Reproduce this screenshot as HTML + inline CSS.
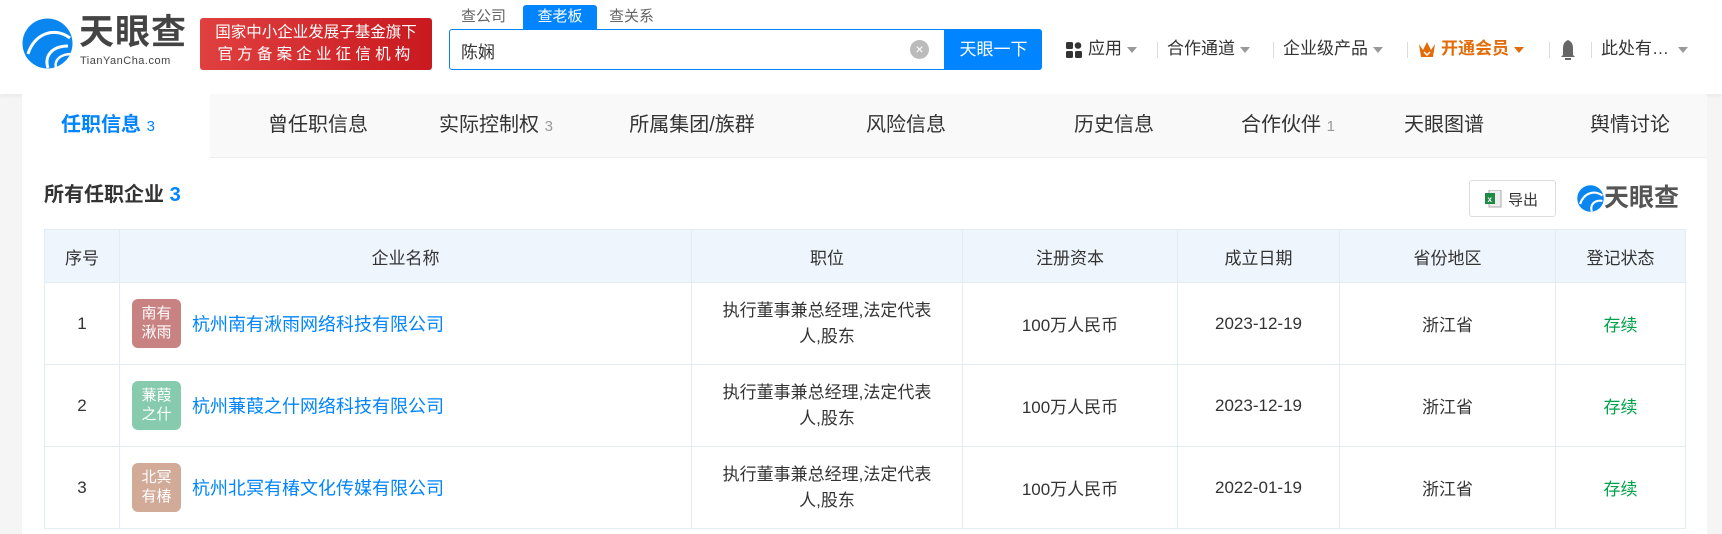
<!DOCTYPE html>
<html><head><meta charset="utf-8">
<style>
*{margin:0;padding:0;box-sizing:border-box}
body{width:1722px;height:529px;overflow:hidden;background:#f5f5f5;font-family:"Liberation Sans","Noto Sans CJK SC",sans-serif;color:#333;position:relative}
.abs{position:absolute;white-space:nowrap}
#hdr{position:absolute;left:0;top:0;width:1722px;height:94px;background:#fff;box-shadow:0 2px 4px rgba(0,0,0,.05)}
.nav{font-size:17px;color:#333;top:38px;line-height:22px}
.tri{display:inline-block;width:0;height:0;border-left:5px solid transparent;border-right:5px solid transparent;border-top:6px solid #999;vertical-align:middle}
.sep{position:absolute;top:42px;width:1px;height:16px;background:#ddd}
#card{position:absolute;left:22px;top:94px;width:1685px;height:440px;background:#fff}
.tabs{position:absolute;left:0;top:0;width:1685px;height:64px;background:#f9f9f9;border-bottom:1px solid #eee}
.tab{position:absolute;top:0;height:64px;line-height:62px;font-size:20px;color:#333;transform:translateX(-50%);white-space:nowrap}
.tab small{font-size:15px;color:#999}
table{position:absolute;left:44px;top:229px;border-collapse:collapse;table-layout:fixed}
td,th{border:1px solid #e4ecf3;text-align:center;font-size:17px;color:#333;font-weight:normal}
th{background:#eef5fc;height:53px}
td{height:82px}
.co{text-align:left;padding-left:12px}
.lg{display:inline-block;width:49px;height:49px;border-radius:6px;color:#fff;font-size:15px;line-height:19px;text-align:center;padding-top:5px;vertical-align:middle;margin-right:11px}
.co a{color:#0084ff;font-size:18px;vertical-align:middle;text-decoration:none}
.g{color:#00a14b}
.pos{line-height:26px}
</style></head><body>
<div id="hdr">
<svg class="abs" style="left:22px;top:18px" width="51" height="51" viewBox="0 0 51 51">
<circle cx="25.5" cy="25.5" r="25" fill="#0a86f0"/>
<path d="M6 36 C12 16 32 8 48 20" stroke="#fff" stroke-width="3" fill="none"/>
<path d="M26 50 C22 38 30 28 46 28" stroke="#fff" stroke-width="3" fill="none"/>
<path d="M34 50 C32 42 38 36 50 36" stroke="#fff" stroke-width="2.5" fill="none"/>
</svg>
<div class="abs" style="left:79px;top:14px;font-size:35px;font-weight:bold;color:#444;letter-spacing:1px;line-height:38px">天眼查</div>
<div class="abs" style="left:80px;top:55px;font-size:11px;color:#444;letter-spacing:.5px">TianYanCha.com</div>
<div class="abs" style="left:200px;top:18px;width:232px;height:52px;background:linear-gradient(90deg,#e04040,#c8191f);border-radius:3px;color:#fff;font-size:15.5px;text-align:center;line-height:22px;padding-top:4px">国家中小企业发展子基金旗下<br><span style="letter-spacing:4.2px">官方备案企业征信机构</span></div>
<div class="abs" style="left:461px;top:6px;font-size:15px;color:#666;line-height:22px">查公司</div>
<div class="abs" style="left:523px;top:5px;width:74px;height:24px;background:#0084ff;color:#fff;font-size:15px;text-align:center;line-height:24px;border-radius:3px 3px 0 0">查老板</div>
<div class="abs" style="left:609px;top:6px;font-size:15px;color:#666;line-height:22px">查关系</div>
<div class="abs" style="left:449px;top:29px;width:496px;height:41px;border:1px solid #0084ff;border-radius:3px 0 0 3px;background:#fff"></div>
<div class="abs" style="left:461px;top:38px;font-size:17px;color:#333">陈娴</div>
<div class="abs" style="left:910px;top:40px;width:19px;height:19px;border-radius:50%;background:#bbb;color:#fff;font-size:14px;line-height:19px;text-align:center">×</div>
<div class="abs" style="left:945px;top:29px;width:97px;height:41px;background:#0084ff;color:#fff;font-size:17px;text-align:center;line-height:41px;border-radius:0 3px 3px 0">天眼一下</div>
<svg class="abs" style="left:1066px;top:42px" width="16" height="16"><rect x="0" y="0" width="7" height="7" rx="1.5" fill="#333"/><circle cx="12" cy="3.5" r="3.3" fill="#333"/><rect x="0" y="9" width="7" height="7" rx="1.5" fill="#333"/><rect x="9" y="9" width="7" height="7" rx="1.5" fill="#333"/></svg>
<div class="abs nav" style="left:1088px">应用 <span class="tri"></span></div>
<div class="sep" style="left:1157px"></div>
<div class="abs nav" style="left:1167px">合作通道 <span class="tri"></span></div>
<div class="sep" style="left:1273px"></div>
<div class="abs nav" style="left:1283px">企业级产品 <span class="tri"></span></div>
<div class="sep" style="left:1407px"></div>
<svg class="abs" style="left:1418px;top:41px" width="18" height="17"><path d="M1 3 L5 9 L9 1 L13 9 L17 3 L15 16 L3 16 Z" fill="#e36c0a"/><path d="M6 11 L9 14 L12 11" stroke="#fff" stroke-width="1.5" fill="none"/></svg>
<div class="abs nav" style="left:1441px;color:#e36c0a;font-weight:bold">开通会员 <span class="tri" style="border-top-color:#e36c0a"></span></div>
<div class="sep" style="left:1549px"></div>
<svg class="abs" style="left:1560px;top:38px" width="16" height="23"><path d="M8 2 C3 4 3 8 3 12 L3 17 L1 19 L15 19 L13 17 L13 12 C13 8 13 4 8 2Z" fill="#666"/><rect x="5" y="20" width="6" height="2" fill="#666"/></svg>
<div class="sep" style="left:1591px"></div>
<div class="abs nav" style="left:1601px">此处有… <span class="tri" style="margin-left:4px"></span></div>
</div>

<div id="card">
<div class="tabs">
<div class="abs" style="left:0;top:0;width:188px;height:65px;background:#fff"></div>
<div class="tab" style="left:86px;color:#0084ff;font-weight:bold">任职信息 <small style="color:#0084ff;font-weight:normal">3</small></div>
<div class="tab" style="left:296px">曾任职信息</div>
<div class="tab" style="left:474px">实际控制权 <small>3</small></div>
<div class="tab" style="left:670px">所属集团/族群</div>
<div class="tab" style="left:884px">风险信息</div>
<div class="tab" style="left:1092px">历史信息</div>
<div class="tab" style="left:1266px">合作伙伴 <small>1</small></div>
<div class="tab" style="left:1422px">天眼图谱</div>
<div class="tab" style="left:1608px">舆情讨论</div>
</div>
<div class="abs" style="left:22px;top:88px;font-size:20px;font-weight:bold;color:#333;line-height:26px">所有任职企业 <span style="color:#0084ff">3</span></div>
<div class="abs" style="left:1447px;top:86px;width:87px;height:37px;border:1px solid #ddd;border-radius:3px;background:#fff"></div>
<svg class="abs" style="left:1463px;top:96px" width="17" height="18"><rect x="4" y="0" width="12" height="17" fill="#eee" stroke="#aaa"/><rect x="0" y="3" width="10" height="11" fill="#1e8a45"/><text x="2.5" y="12" font-size="8" fill="#fff" font-family="Liberation Sans" font-weight="bold">x</text></svg>
<div class="abs" style="left:1486px;top:95px;font-size:15px;color:#333">导出</div>
<svg class="abs" style="left:1555px;top:91px" width="27" height="27" viewBox="0 0 51 51"><circle cx="25.5" cy="25.5" r="25" fill="#0a86f0"/><path d="M6 36 C12 16 32 8 48 20" stroke="#fff" stroke-width="4" fill="none"/><path d="M28 50 C24 38 32 28 48 30" stroke="#fff" stroke-width="4" fill="none"/></svg>
<div class="abs" style="left:1582px;top:89px;font-size:25px;font-weight:bold;color:#555;line-height:30px">天眼查</div>
</div>

<table>
<colgroup><col style="width:75px"><col style="width:572px"><col style="width:271px"><col style="width:215px"><col style="width:162px"><col style="width:216px"><col style="width:130px"></colgroup>
<tr><th>序号</th><th>企业名称</th><th>职位</th><th>注册资本</th><th>成立日期</th><th>省份地区</th><th>登记状态</th></tr>
<tr><td>1</td><td class="co"><span class="lg" style="background:#c98282">南有<br>湫雨</span><a>杭州南有湫雨网络科技有限公司</a></td><td class="pos">执行董事兼总经理,法定代表<br>人,股东</td><td>100万人民币</td><td>2023-12-19</td><td>浙江省</td><td class="g">存续</td></tr>
<tr><td>2</td><td class="co"><span class="lg" style="background:#86cbad">蒹葭<br>之什</span><a>杭州蒹葭之什网络科技有限公司</a></td><td class="pos">执行董事兼总经理,法定代表<br>人,股东</td><td>100万人民币</td><td>2023-12-19</td><td>浙江省</td><td class="g">存续</td></tr>
<tr><td>3</td><td class="co"><span class="lg" style="background:#d1aa98">北冥<br>有椿</span><a>杭州北冥有椿文化传媒有限公司</a></td><td class="pos">执行董事兼总经理,法定代表<br>人,股东</td><td>100万人民币</td><td>2022-01-19</td><td>浙江省</td><td class="g">存续</td></tr>
</table>
</body></html>
